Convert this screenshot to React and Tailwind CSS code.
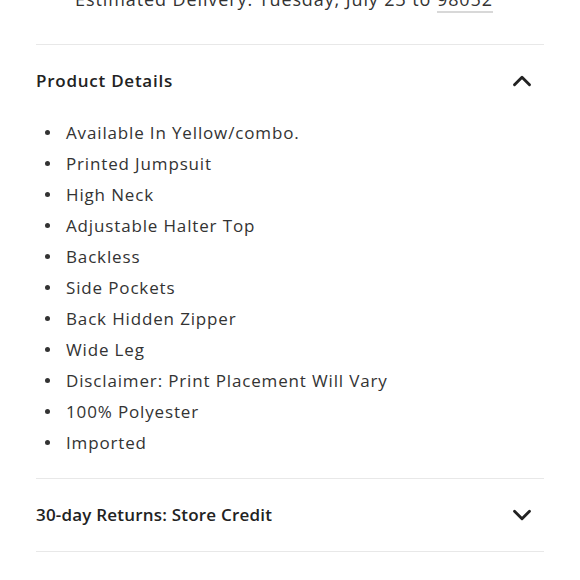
import { ChevronUp, ChevronDown } from 'lucide-react';

const DETAILS = [
  'Available In Yellow/combo.',
  'Printed Jumpsuit',
  'High Neck',
  'Adjustable Halter Top',
  'Backless',
  'Side Pockets',
  'Back Hidden Zipper',
  'Wide Leg',
  'Disclaimer: Print Placement Will Vary',
  '100% Polyester',
  'Imported',
];

export default function App() {
  return (
    <div className="w-[580px] h-[580px] overflow-hidden bg-white text-[#222]" style={{ fontFamily: '"Open Sans", Lato, sans-serif' }}>
      <div className="px-9">
        <p className="-mt-[12px] text-center text-[18px] leading-[22px] tracking-[0.9px] text-[#333] pr-[12px]">
          Estimated Delivery: Tuesday, July 23 to{' '}
          <span className="border-b-2 border-[#d8d8d8]">98052</span>
        </p>

        <div className="mt-[34px] border-t border-[#e8e8e8]" />

        <div className="flex items-center justify-between h-[72px]">
          <h3 className="text-[17px] font-semibold tracking-[0.75px]">Product Details</h3>
          <ChevronUp className="w-[30px] h-[30px] mr-[7px]" strokeWidth={2.3} />
        </div>

        <ul className="pl-[9px] pb-[20px]">
          {DETAILS.map((d) => (
            <li key={d} className="flex items-center h-[31px] text-[17px] tracking-[0.85px] text-[#333]">
              <span className="w-[5px] h-[5px] rounded-full bg-[#333] mr-[16px]" />
              {d}
            </li>
          ))}
        </ul>

        <div className="border-t border-[#e8e8e8]" />

        <div className="flex items-center justify-between h-[72px]">
          <h3 className="text-[17px] font-semibold tracking-[0.2px]">30-day Returns: Store Credit</h3>
          <ChevronDown className="w-[30px] h-[30px] mr-[7px]" strokeWidth={2.3} />
        </div>

        <div className="border-t border-[#e8e8e8]" />
      </div>
    </div>
  );
}
